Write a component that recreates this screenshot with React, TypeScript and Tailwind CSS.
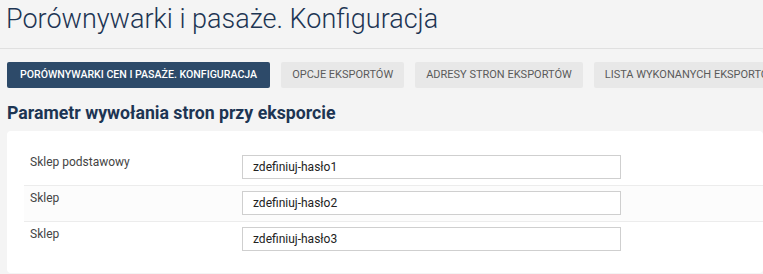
import React from "react";

const tabs = [
  "OPCJE EKSPORTÓW",
  "ADRESY STRON EKSPORTÓW",
  "LISTA WYKONANYCH EKSPORTÓW",
];

const rows = [
  { label: "Sklep podstawowy", value: "zdefiniuj-hasło1", alt: false },
  { label: "Sklep", value: "zdefiniuj-hasło2", alt: true },
  { label: "Sklep", value: "zdefiniuj-hasło3", alt: false },
];

export default function App() {
  return (
    <div className="h-[274px] w-[763px] overflow-hidden bg-[#f4f4f4] font-['Roboto',sans-serif]">
      <div className="h-[49px] border-b border-[#e0e0e0] px-[6px] pt-[1px]">
        <h1 className="text-[27px] font-light leading-[36px] text-[#1d3553]">
          Porównywarki i pasaże. Konfiguracja
        </h1>
      </div>
      <div className="flex gap-[11px] overflow-hidden whitespace-nowrap pl-[7px] pt-[13px]">
        <div className="flex h-[26px] shrink-0 items-center rounded-[2px] bg-[#2d4a69] px-[13px] text-[10.6px] font-medium text-white">
          PORÓWNYWARKI CEN I PASAŻE. KONFIGURACJA
        </div>
        {tabs.map((t) => (
          <div
            key={t}
            className="flex h-[26px] shrink-0 items-center rounded-[2px] bg-[#e8e8e8] px-[11px] text-[11px] text-[#5a5a5a]"
          >
            {t}
          </div>
        ))}
      </div>
      <h2 className="pl-[7px] pt-[13px] text-[17.7px] font-bold leading-[24px] text-[#1d3553]">
        Parametr wywołania stron przy eksporcie
      </h2>
      <div className="ml-[7px] mt-[6px] h-[142px] rounded-[4px] bg-white pl-[17px] pt-[19px]">
        {rows.map((r, i) => (
          <div
            key={i}
            className={`flex items-start pb-[6px] pt-[5px] ${i < 2 ? "border-b border-[#ececec]" : ""} ${r.alt ? "bg-[#fcfcfc]" : "bg-white"}`}
          >
            <div className="w-[218px] pl-[6px] text-[12px] leading-[14px] text-[#444]">
              {r.label}
            </div>
            <div className="flex h-[24px] w-[379px] items-center border border-[#cfcfcf] bg-white pl-[10px] text-[12px] text-[#222]">
              {r.value}
            </div>
          </div>
        ))}
      </div>
    </div>
  );
}
